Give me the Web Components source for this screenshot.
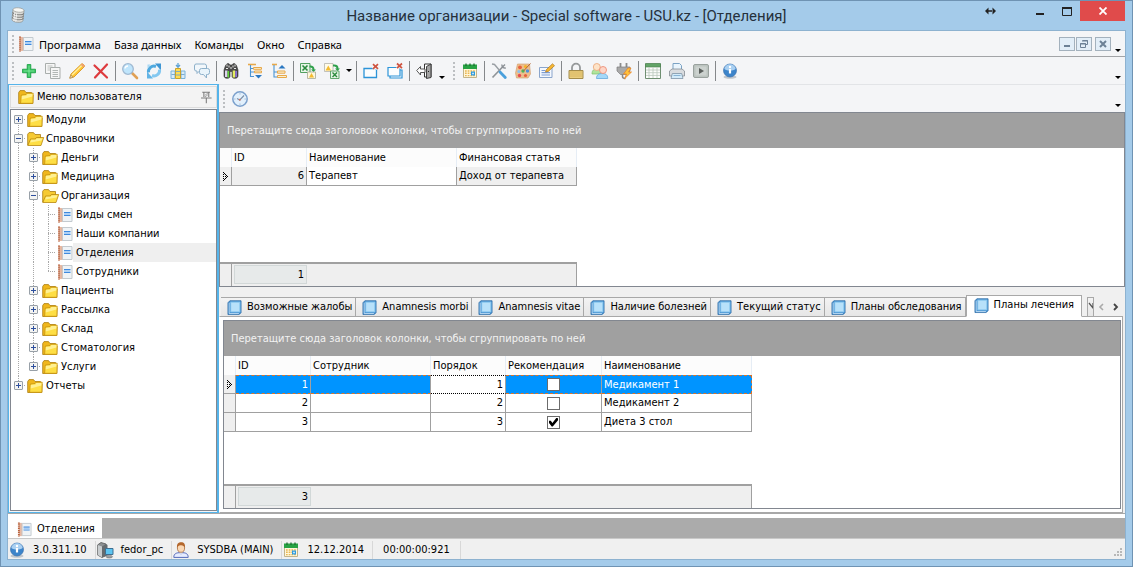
<!DOCTYPE html>
<html lang="ru">
<head>
<meta charset="utf-8">
<title>Название организации - Special software - USU.kz - [Отделения]</title>
<style>
html, body { height: 100%; }
body { margin: 0; background: #a4cbea; color: #000; font: 11px/14px "DejaVu Sans Condensed", "DejaVu Sans", sans-serif; }
</style>
</head>
<body>
<app-window></app-window>
<script>
const ICONS = {
  db: `<g transform="rotate(6 8 8)"><path d="M2.500 3v10c0 1.500 2.500 2.300 5.500 2.300s5.500-.8 5.500-2.300V3z" fill="#dededa" stroke="#8e8e8a" stroke-width=".7"/><path d="M2.500 5.500c0 1.400 2.500 2.200 5.500 2.200s5.500-.8 5.500-2.200M2.500 8c0 1.400 2.500 2.200 5.500 2.200s5.500-.8 5.500-2.200M2.500 10.500c0 1.400 2.500 2.200 5.500 2.200s5.500-.8 5.500-2.200" fill="none" stroke="#828280" stroke-width="1"/><ellipse cx="8" cy="3" rx="5.500" ry="2.200" fill="#f8f8f4" stroke="#9a9a96" stroke-width=".7"/><path d="M4.500 6v8.500M6.500 6.500v8.500" stroke="#fff" opacity=".7"/></g>`,
  note: `<path d="M3 1.500h12v13H3z" fill="#eff3f6" stroke="#c3cacf"/><path d="M2.500 1h2.500v14H2.500z" fill="#e9b9a2"/><path d="M2 .500v15" stroke="#b9603a" stroke-width="2" stroke-dasharray="1.300 .7"/><path d="M5.300 2v12" stroke="#b9aca6" stroke-width=".8"/><path d="M7 5.500h6.500M7 8.500h6.500" stroke="#3f8ade" stroke-width="1.200"/><path d="M7 7h6.500" stroke="#a8cdf4" stroke-width="1.800"/>`,
  folder: `<path d="M.700 14.500V3.500L2 1.600h4.500L8 3.500h5.500v2.500h1.600l-.3 8.500z" fill="#f0b71c" stroke="#a97c12" stroke-width=".8"/><path d="M2.600 14.300L3.300 6l4.700-.5 1-1.300h6.200l-.3 10.100z" fill="#fede44" stroke="#c6920f" stroke-width=".8"/><path d="M3.800 6.900l4.700-.5.9-1.300h5v2.500L3.700 10.500z" fill="#fff3a0" opacity=".85"/>`,
  folderOpen: `<path d="M.700 14V3.200L2 1.600h4.500L8 3.500h5.500v3.500z" fill="#f6ca32" stroke="#a97c12" stroke-width=".8"/><path d="M.800 14.500L3.500 8h4.800L9.300 6.500h7.400L14 14.500z" fill="#fede44" stroke="#b9860e" stroke-width=".8"/><path d="M4.200 8.800h4.500l1-1.400h5.700l-.8 2L3.200 11.500z" fill="#fff3a0" opacity=".85"/>`,
  plus: `<path d="M6.200 1.500h3.600v4.700h4.700v3.600H9.800v4.700H6.200V9.800H1.500V6.200h4.700z" fill="#2fbf58" stroke="#18a044" stroke-width=".8"/><path d="M8 2.500v11M2.500 8h11" stroke="#86eca4" stroke-width=".9"/>`,
  copy: `<path d="M.500.500h9.500v10H.500z" fill="#f6f6f6" stroke="#a9aeac"/><path d="M2.500 3h5M2.500 5h5M2.500 7h3" stroke="#bdc1bf"/><path d="M5.500 4.500h9.500v11H5.500z" fill="#f6f6f6" stroke="#a9aeac"/><path d="M7.500 7.500h5.500M7.500 9.500h5.500M7.500 11.500h5.500M7.500 13.500h5.500" stroke="#b2b7b5"/>`,
  pencil: `<path d="M.800 15.200L2 11 12.500 1c1-.9 3.700 1.600 2.800 2.700L5 14z" fill="#ffc637" stroke="#d38e18" stroke-width=".8"/><path d="M3 12L13 2.200" stroke="#fff0a0" stroke-width="1.300"/><path d="M.800 15.200L1.800 12l2.200 2.200z" fill="#f3dcb0" stroke="#a08250" stroke-width=".6"/><path d="M11.700 1.800l.8-.8c1-.9 3.700 1.600 2.800 2.700l-.8.800z" fill="#f0a070"/>`,
  cross: `<path d="M1.500 2.500l12.500 12M14 1.500L2 14.500" stroke="#dd3a3e" stroke-width="2.200" stroke-linecap="round"/>`,
  search: `<path d="M10 10l5 5" stroke="#e0a054" stroke-width="2.600" stroke-linecap="round"/><circle cx="6" cy="6" r="5.300" fill="#bfe5fc" stroke="#9fb9d2" stroke-width="1.300"/><path d="M3 5.500a3 3 0 0 1 3-2.500" stroke="#fff" stroke-width="1.400" fill="none"/>`,
  refresh: `<path d="M2.500 9.500A5.500 5.500 0 0 1 10 3.500" fill="none" stroke="#4fa9df" stroke-width="3"/><path d="M9 .500h6v7z" fill="#3f96d4"/><path d="M13.500 6.500A5.500 5.500 0 0 1 6 12.500" fill="none" stroke="#84c8f0" stroke-width="3"/><path d="M7 15.500H1v-7z" fill="#62b4e6"/><path d="M1.500 1.500h3l-3 4z" fill="#a9d8f4"/>`,
  columns: `<path d="M8 0v3.500M6 2l2 2.200L10 2" stroke="#5da2d6" fill="none" stroke-width="1.300"/><path d="M1 8h4v7.500H1zM11 8h4v7.500h-4z" fill="#d9ebf7" stroke="#79b2da"/><path d="M5.500 5.500h5v10h-5z" fill="#ffdc52" stroke="#caa22c"/><path d="M6 8.500h4M6 12h4M1.500 11.500H5M11 11.500h3.500" stroke="#6fa5cc" stroke-width=".9"/>`,
  chat: `<path d="M2 1h8.500q2 0 2 2v3q0 2-2 2H5.500L3 10.500V8H2Q.500 8 .500 6V3Q.500 1 2 1z" fill="#f2f7fb" stroke="#8db0ca"/><path d="M7.500 5.500h6q2 0 2 2v2q0 2-2 2h-1v3.500L9.500 11.500h-2q-2 0-2-2v-2q0-2 2-2z" fill="#e9f4fb" stroke="#8db0ca"/>`,
  binoculars: `<path d="M2.500 2.500L4 .700h2l1 1.300h2L10 .700h2l1.500 1.800L15 7v6c0 3-6 3-6 .5V8.500H7v5C7 16 1 16 1 13V7z" fill="#4b4b4b" stroke="#333" stroke-width=".6"/><path d="M4 1.500v2M6 2.500v2M10 2.500v2M12 1.500v2M8 4v2M3 5.500h2M11 5.500h2" stroke="#e8e8e8"/><path d="M2 7.500h2.500V14H2z" fill="#ddd2f0"/><path d="M4.500 8h1.600v6.500H4.500z" fill="#62d23a"/><path d="M9.700 7.500h2.500v7H9.700z" fill="#e4ee62"/><path d="M12.200 8H14v6h-1.800z" fill="#8a6fd0"/>`,
  treeDown: `<path d="M1 1.500h8" stroke="#e6a84a" stroke-width="1.600"/><path d="M3.500 2v11.500H7M3.500 5.500H7M3.500 9H7" stroke="#4a94d4" fill="none" stroke-width="1.100"/><path d="M6.500 4.500h8v1.800h-8zM7.500 8h7v1.800h-7z" fill="#fdf0d0" stroke="#e6a84a"/><path d="M8 12h7l-3.500 3.500z" fill="#2b78c2"/>`,
  treeUp: `<path d="M1 1.500h5" stroke="#e6a84a" stroke-width="1.600"/><path d="M3 2v12h4M3 9h4" stroke="#4a94d4" fill="none" stroke-width="1.100"/><path d="M6.500 8h7.500v2.200H6.500zM6.500 12.500h9v2h-9z" fill="#fdf0d0" stroke="#e6a84a"/><path d="M7.500 5.500h7L11 2z" fill="#2b78c2"/>`,
  excelOut: `<path d="M.500.500h9.500v9H.500z" fill="#e6f4e6" stroke="#52a060"/><path d="M2.500 2.500l5 5M7.500 2.500l-5 5" stroke="#2a8a3c" stroke-width="1.600"/><path d="M9.500 2.500c3-.3 5 1 5 4H16L13.500 9 11 6.500h1.500c0-1.500-1-2-3-2z" fill="#2ea04a"/><path d="M7.500 9h8v6.500h-8z" fill="#fff8dc" stroke="#a8a890" stroke-width=".8"/><path d="M9 14.500l2.500-4.500 2.500 4.500z" fill="#f4bc30"/>`,
  excelIn: `<path d="M.500.500h8.500v8H.500z" fill="#fffbe8" stroke="#b4b4ac" stroke-width=".8"/><path d="M1.500 7.500l2.800-5 2.700 5z" fill="#f4bc30"/><path d="M9 1.500c4-.3 5.500 1 5.500 4H16L13.500 8 11 5.500h1.500c0-1.500-1-2-3.500-2z" fill="#2ea04a"/><path d="M6.500 8h8.500v7.500H6.500z" fill="#e6f4e6" stroke="#52a060" stroke-width=".9"/><path d="M8.500 9.500l4.500 4.500M13 9.500L8.500 14" stroke="#2a8a3c" stroke-width="1.400"/>`,
  winClose: `<path d="M1 5.500h12.500v9H1z" fill="#fbfdfe" stroke="#2c94d8" stroke-width="1.300"/><path d="M10 1.200l5 4.600M15 1.200l-5 4.600" stroke="#f4f5f7" stroke-width="3.600"/><path d="M10 1.200l5 4.600M15 1.200l-5 4.600" stroke="#cf5440" stroke-width="1.700"/>`,
  winCloseAll: `<path d="M3 7h12v8H3z" fill="#fbfdfe" stroke="#2c94d8" stroke-width="1.200"/><path d="M1 4.500h12v8.500H1z" fill="#fbfdfe" stroke="#2c94d8" stroke-width="1.200"/><path d="M10 .500l5 4.600M15 .500l-5 4.600" stroke="#f4f5f7" stroke-width="3.300"/><path d="M10 .500l5 4.600M15 .500l-5 4.600" stroke="#cf5440" stroke-width="1.700"/>`,
  exit: `<path d="M8.500 1h6.500v13H8.500z" fill="#fff" stroke="#333"/><path d="M10.500 3.500L15 1v13.500l-4.500 1z" fill="#a4a4a4" stroke="#333" stroke-width=".9"/><path d="M12 8.500h1" stroke="#222"/><path d="M.700 7.500L4.500 3.500V6H9v3.500H4.500V12z" fill="#fff" stroke="#444" stroke-width=".9"/>`,
  calendar: `<path d="M1.500 4h13v10.500h-13z" fill="#fff7da" stroke="#c2b48a"/><path d="M1 1.500h14V6H1z" fill="#27a243"/><path d="M4 .500v2.500M8 .500v2.500M12 .500v2.500" stroke="#176b2b" stroke-width="1.200"/><path d="M3 8h10M3 10.300h10M3 12.600h10" stroke="#e9b653" stroke-width="1.400" stroke-dasharray="1.700 1"/><path d="M9 8.500h4v4H9z" fill="#2c9be0"/><path d="M10.300 9.800h1.400v1.400h-1.400z" fill="#fff"/>`,
  tools: `<path d="M1.500 14.500L12 3.500" stroke="#8f9498" stroke-width="1.700"/><path d="M11 1.500c-.5 2 1.500 4 3.800 3.300M11 4.500L14 1.500" stroke="#8b9096" stroke-width="1.400" fill="none"/><path d="M1 1l2.500.500L9 8" stroke="#9a9fa4" stroke-width="1.400" fill="none"/><path d="M9 9l5.300 5.500" stroke="#4aa0dc" stroke-width="2.800" stroke-linecap="round"/>`,
  palette: `<path d="M2.500 1h12l1 10-2.500 4H1.500L.500 10z" fill="#ecbf8e" stroke="#d09a68" stroke-width=".6"/><circle cx="5" cy="4.300" r="1.900" fill="#e8603c"/><circle cx="10.500" cy="3.500" r="1.600" fill="#f4b428"/><circle cx="8" cy="8" r="1.700" fill="#4cb45c"/><circle cx="12.500" cy="8" r="1.700" fill="#4f90dc"/><circle cx="3.800" cy="8.500" r="1.500" fill="#8ac0ee"/><circle cx="4.500" cy="12.500" r="1.700" fill="#e84c50"/><circle cx="10.500" cy="12.500" r="1.600" fill="#e8603c"/><path d="M15.500.500L8.500 8" stroke="#b4622e" stroke-width="1"/>`,
  form: `<path d="M.500 4.500h12.500v10H.500z" fill="#f4f8fe" stroke="#8aa5cc"/><path d="M2.500 7.500h4M2.500 9.700h8.500M2.500 12h8.500" stroke="#7d9dd4" stroke-width="1.200"/><path d="M6.500 9L7.500 6.500 13.500.800l2 1.900L9.300 8.400z" fill="#f7b733" stroke="#a9761e" stroke-width=".7"/>`,
  lock: `<path d="M4 7.500V4.500a4 3.800 0 0 1 8 0v3" fill="none" stroke="#96999a" stroke-width="1.800"/><path d="M1 7.500h14v8H1z" fill="#ebcf80" stroke="#a48c4c"/><path d="M2 9h12M2 11h12M2 13h12" stroke="#d3b05a" stroke-width=".8"/>`,
  users: `<path d="M0 11c0-4 2-5 5-5s4.500 1 4.500 5z" fill="#b0e49c" stroke="#7cc068" stroke-width=".7"/><circle cx="4.800" cy="4" r="3.500" fill="#fde3c8" stroke="#ecac80" stroke-width=".9"/><path d="M4.500 15.500c0-4 2.500-5 5.700-5s5.500 1 5.500 5z" fill="#a4d8f8" stroke="#62a8dc" stroke-width=".8"/><circle cx="11" cy="7" r="3.500" fill="#fdd6c8" stroke="#ec8e78" stroke-width=".9"/>`,
  plug: `<path d="M4.500 0v4M10.500 0v4" stroke="#8c8c8c" stroke-width="1.800"/><path d="M1 4h13v4l-3.500 3.500h-6L1 8z" fill="#a9a9a9" stroke="#7c7c7c" stroke-width=".7"/><path d="M6.500 11v2.500c0 1.500 1.500 2 3 2" fill="none" stroke="#888" stroke-width="1.500"/><path d="M12 5L7.500 11h3l-2 4.800L15.500 9h-3l2.500-4z" fill="#ffc23a" stroke="#e8842a" stroke-width=".8"/>`,
  grid: `<path d="M.500 1h15v14.500H.500z" fill="#fcfdfc" stroke="#6f8f72"/><path d="M.500.500h15V4H.500z" fill="#63a468" stroke="#4a7f4e" stroke-width=".6"/><path d="M4 4.500V15M8 4.500V15M12 4.500V15M1 7h14M1 9.700h14M1 12.400h14" stroke="#b9c6bb" stroke-width=".8"/>`,
  printer: `<path d="M4 7V.500h6.500L12.500 2.500V7" fill="#eaf5fd" stroke="#7ba2c4"/><path d="M.500 8l2.500-2h10l2.500 2v5H.500z" fill="#d9dcdf" stroke="#868d94" stroke-width=".8"/><path d="M3.300 10.500h9.400l1.300 5H2z" fill="#d4ebf9" stroke="#7d93a6" stroke-width=".8"/><path d="M4.500 12.500h7" stroke="#8ab4d4"/>`,
  play: `<rect x=".500" y="1.500" width="15" height="13" rx="1.500" fill="#bcc4c0" stroke="#9aa29e"/><path d="M2.500 3.500h11v9h-11z" fill="#ccd2cf"/><path d="M6 5l5 3-5 3z" fill="#5a5f5c"/>`,
  info: `<ellipse cx="8" cy="14" rx="6.500" ry="1.700" fill="#c0c6cc"/><circle cx="8" cy="7.500" r="6.500" fill="#3c84ca" stroke="#3a70ac" stroke-width=".7"/><path d="M2.300 6C3-.5 13-.5 13.700 6 10.500 8 5.500 8 2.300 6z" fill="#a9d0f2"/><path d="M8 6v4.500" stroke="#fff" stroke-width="2.200"/><circle cx="8" cy="4" r="1.200" fill="#fff"/>`,
  clock: `<circle cx="8" cy="8" r="7.200" fill="#e2f0fc" stroke="#7ba0cc" stroke-width="1.500"/><path d="M8 2.200v1.300M8 12.500v1.300M2.200 8h1.300M12.500 8h1.300" stroke="#9db6d0"/><path d="M12 4.500L7.800 9 5 7.500" stroke="#7b8fa6" fill="none" stroke-width="1.100"/><circle cx="7.800" cy="8.800" r="1" fill="#d07868"/>`,
  book: `<path d="M1 3L3 .800h12V13.500l-2 2H1z" fill="#3d8acb" stroke="#2d6ba6" stroke-width=".8"/><path d="M3.500 1.700h10.800v11.500H3.500z" fill="#8cc8f0"/><path d="M4.500 3h8.500v9H4.500z" fill="#b8e1fa"/><path d="M2.300 2.800v11.700h10.400" fill="none" stroke="#d2e9f9" stroke-width=".9"/>`,
  pin: `<path d="M4 1.500h9.500M6 2v5.500M12 2v5.500M2.500 8.500h13M9 9v6" stroke="#7c7c7c" stroke-width="1.300" fill="none"/><path d="M7 5.500l4-3M7 7.500l4-3" stroke="#8c8c8c" stroke-width=".9"/>`,
  server: `<path d="M.500 3L4 .500 9 2v11.500l-4 2-4.500-2.500z" fill="#8c9092" stroke="#555" stroke-width=".8"/><path d="M.700 3L5 4.500V15.300L.700 13z" fill="#c8ccce"/><path d="M5 4.500L9 2l1.500 1v10.500L5 15.300z" fill="#666b6e"/><path d="M8.500 6.500h7.500v6H8.500z" fill="#5cc4f0" stroke="#3d6f92"/><ellipse cx="12.300" cy="14.700" rx="3.200" ry="1.300" fill="#9aa0a4" stroke="#666" stroke-width=".5"/>`,
  user: `<path d="M.800 15.400c0-3.500 2-4.800 7.200-4.800s7.200 1.300 7.200 4.800z" fill="#e6ecff" stroke="#5468b8"/><path d="M6 10l2 2.500L10 10z" fill="#fff" stroke="#8d9ccc" stroke-width=".5"/><ellipse cx="8" cy="5.800" rx="3.600" ry="4.500" fill="#fbd8b4" stroke="#a4683a" stroke-width=".8"/><path d="M4.200 6c-.8-4 1.200-5.700 4-5.700S12.500 2 11.800 6c-.6-2-2-3-4.200-2.800C5.500 3.200 4.800 4.500 4.200 6z" fill="#b4672c"/>`
};

/* Base class: every element puts its styles and markup into an open shadow root. */
class UiElement extends HTMLElement {
  connectedCallback() {
    if (this.shadowRoot) return;
    const t = document.createElement('template');
    t.innerHTML = `<style>*{box-sizing:border-box}${this.css()}</style>${this.html()}`;
    this.attachShadow({ mode: 'open' }).append(t.content.cloneNode(true));
  }
  css() { return ''; }
  html() { return '<slot></slot>'; }
}

class UiIcon extends UiElement {
  css() { return `:host{display:block;flex:none;width:var(--icon,16px);height:var(--icon,16px)} svg{display:block;width:100%;height:100%;overflow:visible}`; }
  html() { return `<svg viewBox="0 0 16 16" aria-hidden="true">${ICONS[this.getAttribute('name')] || ''}</svg>`; }
}

class TitleBar extends UiElement {
  css() { return `
    :host{display:grid;grid-template-columns:1fr auto 1fr;height:30px;flex:none;color:#26313c}
    .logo{padding:6px 0 0 2px}
    h1{margin:0;font:15px/30px Roboto,"Noto Sans",sans-serif}
    .btns{display:flex;justify-content:flex-end}
    button{border:0;padding:0;background:none;width:27px;height:20px;display:grid;place-items:center}
    button.sync{width:28px;margin-right:22px}
    button.close{width:45px;background:#e04b4b}
    svg{display:block}`; }
  html() { return `
    <div class="logo"><ui-icon name="db"></ui-icon></div>
    <h1><slot></slot></h1>
    <div class="btns">
      <button class="sync" aria-label="Переместить"><svg width="11" height="8" viewBox="0 0 11 8"><path d="M0 4l3.500-3.500v7zM11 4L7.500.500v7zM3 3.200h5v1.600H3z" fill="#222"/></svg></button>
      <button aria-label="Свернуть"><svg width="9" height="11"><path d="M1 7h8v2H1z" fill="#222"/></svg></button>
      <button aria-label="Развернуть"><svg width="10" height="9"><path d="M.500 1h9v7.500h-9z" fill="none" stroke="#222"/><path d="M0 0h10v2H0z" fill="#222"/></svg></button>
      <button class="close" aria-label="Закрыть"><svg width="8" height="8"><path d="M.500.500l7 7M7.500.500l-7 7" stroke="#fff" stroke-width="1.800"/></svg></button>
    </div>`; }
}

/* Dotted handle at the left end of a bar. */
class BarGrip extends UiElement {
  css() { return `:host{display:block;flex:none;width:9px;height:20px;background:linear-gradient(#bcbfc2 2px,transparent 2px) 4px 1px/2px 4px repeat-y}`; }
  html() { return ''; }
}

class BarMore extends UiElement {
  css() { return `:host{display:block;flex:none} button{border:0;background:none;padding:0;width:13px;height:16px;display:flex;align-items:flex-end;justify-content:flex-start} i{margin-left:3px;border:3px solid transparent;border-top-color:#000;border-bottom:0}`; }
  html() { return `<button aria-label="Ещё"><i></i></button>`; }
}

class MenuBar extends UiElement {
  css() { return `
    :host{display:flex;align-items:center;height:26px;flex:none;box-sizing:border-box;background:#f4f5f7;border-bottom:1px solid #a2a4a7}
    ui-icon{margin:0 5px 0 1px}
    nav{display:flex;flex:1;gap:13px}
    nav button{border:0;background:none;padding:2px 0 0;color:#000;font:11px/16px "Noto Sans",sans-serif}
    .mdi{border:1px solid #a3b1bd;background:#e2eef8;width:16px;height:14px;padding:0;display:grid;place-items:center;margin-right:1px}
    .mdi:last-of-type{margin:0 1px 0 2px}
    svg{display:block}`; }
  html() {
    const items = ['Программа', 'База данных', 'Команды', 'Окно', 'Справка'];
    return `<bar-grip></bar-grip><ui-icon name="note"></ui-icon>
    <nav>${items.map(i => `<button>${i}</button>`).join('')}</nav>
    <button class="mdi" aria-label="Свернуть окно"><svg width="8" height="8"><path d="M1 5h6v2H1z" fill="#6c8196"/></svg></button>
    <button class="mdi" aria-label="Восстановить окно"><svg width="8" height="8"><path d="M2.500.500h5v4h-2M2 1h6M.500 3.500h5v4h-5zM0 4h6" fill="none" stroke="#6c8196"/></svg></button>
    <button class="mdi" aria-label="Закрыть окно"><svg width="8" height="8"><path d="M1 1l6 6M7 1L1 7" stroke="#6c8196" stroke-width="2"/></svg></button>
    <bar-more></bar-more>`; }
}

class ToolBar extends UiElement {
  css() { return `
    :host{display:flex;align-items:center;height:28px;flex:none;box-sizing:border-box;background:#f4f5f7}
    .sp{flex:1}
    button{border:0;background:none;padding:0;width:24px;height:24px;display:grid;place-items:center;flex:none}
    .drop{width:10px}
    .drop i{border:3px solid transparent;border-top-color:#000;border-bottom:0}
    hr{flex:none;width:1px;height:20px;border:0;margin:0 2px;background:#85888b}`; }
  html() {
    const out = this.getAttribute('items').split(' ').map(k => ({
      '|': '<hr>', ':': '<bar-grip></bar-grip>', '+': '<bar-more></bar-more>', '>': '<span class="sp"></span>',
      'v': '<button class="drop" aria-label="Список"><i></i></button>'
    })[k] || `<button aria-label="${k}"><ui-icon name="${k}"></ui-icon></button>`);
    return out.join('');
  }
}

class TreePanel extends UiElement {
  css() { return `
    :host{display:flex;flex-direction:column;flex:none;box-sizing:border-box;width:211px;padding:1px 0 1px 1px;border:1px solid #55b4ea;border-width:1px 2px 1px 1px;background:#f4f5f7}
    header{display:flex;align-items:center;height:22px;margin:0 0 1px;padding:0 4px 0 7px;border:1px solid #dcdcdc;background:#f3f3f3}
    header span{flex:1;padding-left:3px}
    header ui-icon.pin{--icon:13px}
    button{border:0;padding:0;background:none}
    ul{list-style:none;margin:0;padding:0;flex:1;background:#fff;border:1px solid #828790}
    li{display:flex;align-items:center;height:19px}
    li ui-icon{margin:0 0 0 1px}
    .g{width:15px;height:19px;flex:none;display:grid;place-items:center;--v:repeating-linear-gradient(#a8a8a8 0 1px,transparent 1px 2px);--h:repeating-linear-gradient(90deg,#a8a8a8 0 1px,transparent 1px 2px)}
    .v{background:var(--v) 7px 0/1px 100% no-repeat}
    .t{background:var(--v) 7px 0/1px 100% no-repeat,var(--h) 7px 9px/8px 1px no-repeat}
    .l{background:var(--v) 7px 0/1px 10px no-repeat,var(--h) 7px 9px/8px 1px no-repeat}
    .f{background:var(--v) 7px 9px/1px 10px no-repeat,var(--h) 7px 9px/8px 1px no-repeat}
    .g button{width:9px;height:9px;border:1px solid #98a0a8;border-radius:1px;background:linear-gradient(#2d4f9e,#2d4f9e) 1px 3px/5px 1px no-repeat,#f4f4f2}
    .g button.p{background:linear-gradient(#2d4f9e,#2d4f9e) 1px 3px/5px 1px no-repeat,linear-gradient(#2d4f9e,#2d4f9e) 3px 1px/1px 5px no-repeat,#f4f4f2}
    a{flex:1;align-self:stretch;line-height:19px;color:#000;text-decoration:none;padding-left:3px}
    .on a{background:#efefef}`; }
  html() {
    /* guides, expander sign, icon, title */
    const rows = [
      ['f', '+', 'folder', 'Модули'], ['t', '-', 'folderOpen', 'Справочники'],
      ['vt', '+', 'folder', 'Деньги'], ['vt', '+', 'folder', 'Медицина'], ['vt', '-', 'folderOpen', 'Организация'],
      ['vvt', '', 'note', 'Виды смен'], ['vvt', '', 'note', 'Наши компании'], ['vvt', '', 'note', 'Отделения'], ['vvl', '', 'note', 'Сотрудники'],
      ['vt', '+', 'folder', 'Пациенты'], ['vt', '+', 'folder', 'Рассылка'], ['vt', '+', 'folder', 'Склад'],
      ['vt', '+', 'folder', 'Стоматология'], ['vl', '+', 'folder', 'Услуги'], ['l', '+', 'folder', 'Отчеты']];
    const li = ([g, sign, icon, text]) => `<li class="${text === 'Отделения' ? 'on' : ''}">${[...g].map((c, i) =>
      `<span class="g ${c}">${sign && i === g.length - 1 ? `<button class="${sign === '+' ? 'p' : ''}" aria-label="${sign === '+' ? 'Развернуть' : 'Свернуть'}"></button>` : ''}</span>`).join('')}<ui-icon name="${icon}"></ui-icon><a href="#">${text}</a></li>`;
    return `<header><ui-icon name="folder"></ui-icon><span>Меню пользователя</span><button aria-label="Закрепить"><ui-icon class="pin" name="pin"></ui-icon></button></header><ul>${rows.map(li).join('')}</ul>`;
  }
}

const GRIDS = {
  departments: {
    cols: [['ID', 75, 'num'], ['Наименование', 150, ''], ['Финансовая статья', 120, '']],
    rows: [['6', 'Терапевт', 'Доход от терапевта']], shade: [0, 2], total: '1'
  },
  plans: {
    cols: [['ID', 75, 'num'], ['Сотрудник', 120, ''], ['Порядок', 75, 'num'], ['Рекомендация', 96, 'chk'], ['Наименование', 150, '']],
    rows: [['1', '', '1', false, 'Медикамент 1'], ['2', '', '2', false, 'Медикамент 2'], ['3', '', '3', true, 'Диета 3 стол']],
    shade: [], total: '3', selected: 0, focus: 2
  }
};

class DataGrid extends UiElement {
  css() { return `
    :host{display:flex;flex-direction:column;align-items:flex-start;min-height:0;background:#fff;border:1px solid #828790}
    .group{align-self:stretch;height:35px;line-height:36px;padding-left:7px;background:#a0a0a0;color:#f2f2f2;flex:none}
    table{table-layout:fixed;border-collapse:separate;border-spacing:0;flex:none}
    th,td{height:19px;padding:0 2px;border:0 solid #a0a0a0;line-height:14px;font-weight:normal;text-align:left;white-space:nowrap}
    th{border-right:1px solid #e6edf5;background:#fcfcfc}
    td{border-width:0 1px 1px 0}
    td.ind{background:#efefef;padding:0}
    td.ind svg{display:block;margin:auto}
    .num{text-align:right}
    td.chk{text-align:center;padding:0}
    td.shade{background:#efefef}
    tr.sel td{color:#fff;background:#0094ff;border-top:1px dashed #d9732b;border-bottom:1px dashed #d9732b}
    tr.sel td:last-child{border-right:1px dashed #d9732b}
    tr.sel td.ind{background:#efefef;border-top:0;border-bottom:1px solid #a0a0a0}
    tr.sel td.focus{color:#000;background:#fff;border-top:1px dotted #000;border-bottom:1px dotted #000}
    input{appearance:none;display:block;margin:0 auto;width:13px;height:13px;border:1px solid #6c6c6c;background:#fff}
    input:checked::after{content:"";display:block;width:9px;height:9px;margin:1px;background:#000;clip-path:polygon(0 35%,20% 35%,38% 60%,85% 0,100% 12%,100% 30%,42% 100%,30% 100%,0 60%)}
    .gap{flex:1}
    footer{display:flex;flex:none;height:24px;border-top:2px solid #a0a0a0;border-right:1px solid #a0a0a0;background:#efefef}
    footer i{width:12px;border-right:1px solid #a0a0a0}
    output{margin:1px 0 2px 2px;width:73px;border:1px solid #d2d8d8;background:#e7eaea;text-align:right;line-height:18px;padding-right:2px}`; }
  html() {
    const d = GRIDS[this.getAttribute('source')];
    const w = 12 + d.cols.reduce((s, c) => s + c[1], 0);
    const arrow = '<svg width="7" height="9" shape-rendering="crispEdges"><path d="M1 0h1v1H1zM1 2h1v1H1zM2 1h1v1H2zM3 2h1v1H3zM4 3h1v1H4zM5 4h1v1H5zM4 5h1v1H4zM3 6h1v1H3zM2 7h1v1H2zM1 8h1v1H1zM1 4h1v1H1zM1 6h1v1H1zM3 4h1v1H3z" fill="#000"/></svg>';
    const cell = (v, i, r) => {
      const c = d.cols[i], cls = [c[2], d.shade.includes(i) ? 'shade' : '', r === d.selected && i === d.focus ? 'focus' : ''].join(' ').trim();
      return `<td class="${cls}">${c[2] === 'chk' ? `<input type="checkbox" aria-label="Рекомендация ${r + 1}"${v ? ' checked' : ''}>` : v}</td>`;
    };
    return `<div class="group">Перетащите сюда заголовок колонки, чтобы сгруппировать по ней</div>
    <table style="width:${w}px"><colgroup><col style="width:12px">${d.cols.map(c => `<col style="width:${c[1]}px">`).join('')}</colgroup>
    <thead><tr><th></th>${d.cols.map(c => `<th>${c[0]}</th>`).join('')}</tr></thead>
    <tbody>${d.rows.map((row, r) => `<tr class="${r === d.selected ? 'sel' : ''}"><td class="ind">${r === 0 ? arrow : ''}</td>${row.map((v, i) => cell(v, i, r)).join('')}</tr>`).join('')}</tbody></table>
    <div class="gap"></div>
    <footer style="width:${w}px"><i></i><output>${d.total}</output></footer>`;
  }
}

class TabPages extends UiElement {
  css() { return `
    :host{display:flex;flex-direction:column;min-height:0;padding:8px 2px 0 0;background:#f0f0f0}
    .strip{display:flex;align-items:flex-end;height:22px;flex:none;position:relative;z-index:1;margin-bottom:-1px;padding-left:2px}
    button{border:0;padding:0;background:none;color:#000;font:inherit;white-space:nowrap}
    .tab{display:flex;align-items:center;gap:5px;flex:none;height:20px;padding:0 3px 0 6px;--icon:15px;border:1px solid #a8a8a8;border-left-width:0;background:linear-gradient(#f3f3f3,#e6e6e6)}
    .tab.on{height:22px;padding:0 7px 2px;background:#fff;border-left-width:1px;border-bottom-color:#fff}
    .tab.cut{width:7px;padding:0;margin-left:5px;overflow:hidden;border-left-width:1px}
    .sp{flex:1}
    .ar{width:18px;height:20px;display:grid;place-items:center}
    .page{display:flex;flex:1;min-height:0;padding:3px 1px 3px 3px;background:#fff;border:1px solid #a8a8a8;border-left-color:#fff}
    .page ::slotted(*){flex:1;min-width:0}`; }
  html() {
    const tabs = ['Возможные жалобы', 'Anamnesis morbi', 'Anamnesis vitae', 'Наличие болезней', 'Текущий статус', 'Планы обследования', 'Планы лечения'];
    return `<div class="strip" role="tablist">${tabs.map((t, i) => `<button role="tab" class="tab${i === 6 ? ' on' : ''}" aria-selected="${i === 6}"><ui-icon name="book"></ui-icon>${t}</button>`).join('')}
    <button class="tab cut" aria-label="Следующая вкладка"><svg width="6" height="12"><path d="M1 2l4 5V2" fill="none" stroke="#555" stroke-width="1.300"/></svg></button><span class="sp"></span>
    <button class="ar" aria-label="Назад"><svg width="6" height="8"><path d="M5 1L2 4l3 3" fill="none" stroke="#aaa" stroke-width="1.600"/></svg></button>
    <button class="ar" aria-label="Вперёд"><svg width="6" height="8"><path d="M1 1l3 3-3 3" fill="none" stroke="#444" stroke-width="1.800"/></svg></button></div>
    <div class="page" role="tabpanel"><slot></slot></div>`;
  }
}

class WindowTabs extends UiElement {
  css() { return `
    :host{display:flex;flex:none;box-sizing:border-box;height:26px;border-top:1px solid #a8a8a8;border-bottom:1px solid #c8c8c8;background:linear-gradient(#fff 4px,#ababab 4px)}
    button{display:flex;align-items:center;gap:5px;border:0;background:#fff;padding:6px 7px 0 9px;color:#000;font:inherit;--icon:15px}`; }
  html() { return `<button><ui-icon name="note"></ui-icon><slot></slot></button>`; }
}

class StatusBar extends UiElement {
  css() { return `
    :host{display:flex;align-items:center;height:20px;flex:none;box-sizing:border-box;padding-top:2px;background:#f0f0f0}
    span{display:flex;align-items:center;height:18px;gap:8px;padding:0 8px 0 1px;border-right:1px solid #d8d8d8}
    span.plain{padding:0 10px}
    .sp{flex:1}
    svg{align-self:flex-end;margin:0 2px 2px 0}`; }
  html() { return `
    <span><ui-icon name="info"></ui-icon>3.0.311.10</span><span><ui-icon name="server"></ui-icon>fedor_pc</span>
    <span><ui-icon name="user"></ui-icon>SYSDBA (MAIN)</span><span><ui-icon name="calendar"></ui-icon>12.12.2014</span>
    <span class="plain">00:00:00:921</span><i class="sp"></i>
    <svg width="9" height="9"><path d="M6 0h2v2H6zM6 3h2v2H6zM6 6h2v2H6zM3 3h2v2H3zM3 6h2v2H3zM0 6h2v2H0z" fill="#b8b8b8"/></svg>`; }
}

class AppWindow extends UiElement {
  css() { return `
    :host{display:flex;flex-direction:column;min-height:100vh;padding:0 7px 7px;border:1px solid #6f93b3;background:#a4cbea;box-sizing:border-box}
    .client{display:flex;flex-direction:column;flex:1;background:#f0f0f0;outline:1px solid #8db2d0}
    .work{display:flex;flex:1;min-height:400px}
    .right{display:flex;flex-direction:column;flex:1;min-width:0}
    .top{flex:173 1 0}
    .bottom{flex:218 1 0}
    .client > tool-bar{height:27px}
    .right tool-bar{border-top:1px solid #e2e4e7}`; }
  html() { return `
    <title-bar>Название организации - Special software - USU.kz - [Отделения]</title-bar>
    <div class="client">
      <menu-bar></menu-bar>
      <tool-bar items=": plus copy pencil cross | search refresh columns chat | binoculars treeDown treeUp | excelOut excelIn v | winClose winCloseAll | exit + : calendar | tools palette form | lock users plug | grid printer play | info > +"></tool-bar>
      <div class="work">
        <tree-panel></tree-panel>
        <div class="right">
          <tool-bar items=": clock > +"></tool-bar>
          <data-grid class="top" source="departments"></data-grid>
          <tab-pages class="bottom"><data-grid source="plans"></data-grid></tab-pages>
        </div>
      </div>
      <window-tabs>Отделения</window-tabs>
      <status-bar></status-bar>
    </div>`; }
}

[['ui-icon', UiIcon], ['title-bar', TitleBar], ['bar-grip', BarGrip], ['bar-more', BarMore], ['menu-bar', MenuBar], ['tool-bar', ToolBar],
 ['tree-panel', TreePanel], ['data-grid', DataGrid], ['tab-pages', TabPages], ['window-tabs', WindowTabs], ['status-bar', StatusBar],
 ['app-window', AppWindow]].forEach(([n, c]) => customElements.define(n, c));
</script>
</body>
</html>
